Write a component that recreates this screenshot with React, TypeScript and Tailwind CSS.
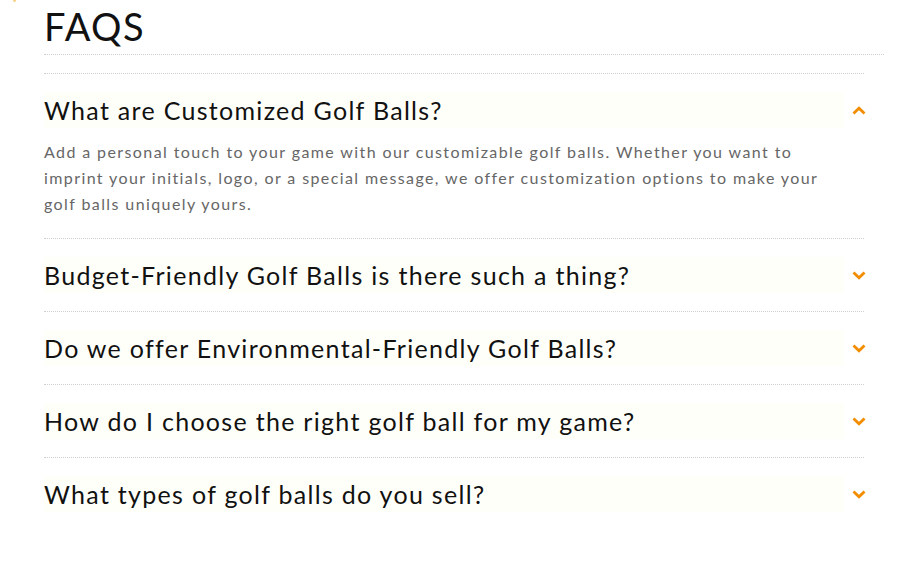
import React from "react";

const items = [
  "What are Customized Golf Balls?",
  "Budget-Friendly Golf Balls is there such a thing?",
  "Do we offer Environmental-Friendly Golf Balls?",
  "How do I choose the right golf ball for my game?",
  "What types of golf balls do you sell?",
];

function Chevron({ up }: { up: boolean }) {
  return (
    <svg width="14" height="9" viewBox="0 0 14 9" className="shrink-0">
      <path
        d={up ? "M1.5 7.5 L7 2.2 L12.5 7.5" : "M1.5 1.5 L7 6.8 L12.5 1.5"}
        fill="none"
        stroke="#f28c00"
        strokeWidth="2.8"
      />
    </svg>
  );
}

export default function App() {
  return (
    <div className="relative w-[911px] h-[584px] bg-white" style={{ fontFamily: "Lato, 'Noto Sans', sans-serif" }}>
      <div className="absolute left-[13px] top-[-2px] w-[3px] h-[4px] rounded-full bg-[#f5d58a]" />
      <div className="pl-[44px] w-[884px]">
        <div className="border-b border-dotted border-[#cfcfcf] pt-[6px] pb-[8px]">
          <h2 className="text-[38px] leading-[40px] text-[#111] tracking-[1.4px] font-normal">FAQS</h2>
        </div>
        <div className="mt-[18px] w-[820px]">
          {items.map((q, i) => (
            <div key={q} className="border-t border-dotted border-[#cfcfcf]">
              <div className="flex items-center h-[72px]">
                <div className="flex-1 h-[36px] bg-[#fffffa] flex items-center -mt-[1px]">
                  <span className="text-[25px] leading-[30px] text-[#111] tracking-[1.3px]">{q}</span>
                </div>
                <div className="w-[22px] flex justify-end -mr-[2px]">
                  <Chevron up={i === 0} />
                </div>
              </div>
              {i === 0 && (
                <p className="-mt-[7px] pb-[21px] pr-[30px] text-[16px] leading-[26px] text-[#666] tracking-[1.4px]">
                  Add a personal touch to your game with our customizable golf balls. Whether you want to imprint your initials, logo, or a special message, we offer customization options to make your golf balls uniquely yours.
                </p>
              )}
            </div>
          ))}
        </div>
      </div>
    </div>
  );
}
